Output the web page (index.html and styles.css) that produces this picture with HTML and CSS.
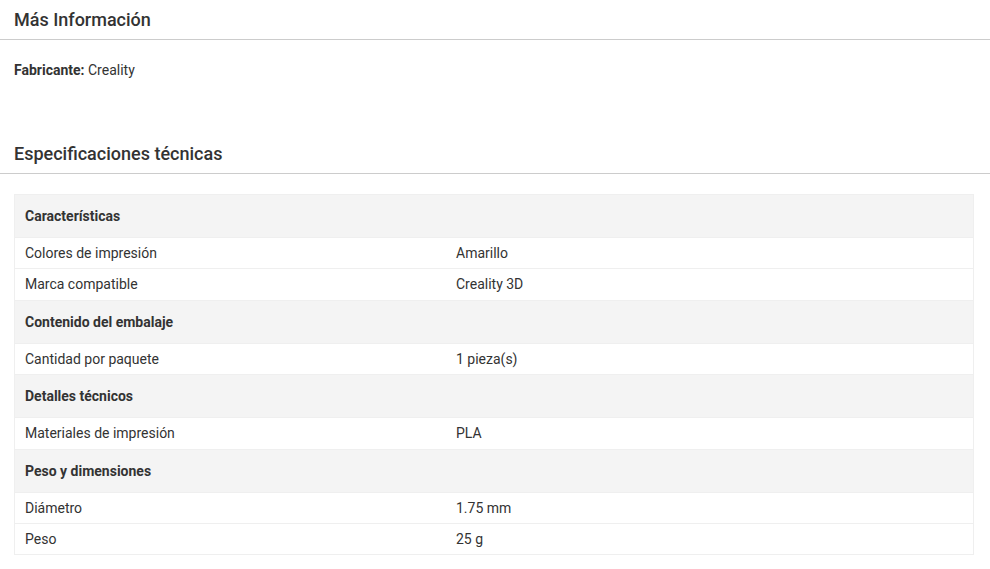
FILE: index.html
```html
<!DOCTYPE html>
<html lang="es">
<head>
  <meta charset="UTF-8">
  <meta name="viewport" content="width=device-width, initial-scale=1.0">
  <title>Más Información</title>
  <link rel="stylesheet" href="styles.css">
</head>
<body>
  <!-- Más información -->
  <h2 class="block-title">Más Información</h2>
  <p class="maker"><strong>Fabricante:</strong> Creality</p>

  <!-- Especificaciones -->
  <h2 class="block-title specs-title">Especificaciones técnicas</h2>
  <table class="specs">
    <tr class="group"><td colspan="2">Características</td></tr>
    <tr><td class="label">Colores de impresión</td><td>Amarillo</td></tr>
    <tr><td class="label">Marca compatible</td><td>Creality 3D</td></tr>
    <tr class="group"><td colspan="2">Contenido del embalaje</td></tr>
    <tr><td class="label">Cantidad por paquete</td><td>1 pieza(s)</td></tr>
    <tr class="group"><td colspan="2">Detalles técnicos</td></tr>
    <tr><td class="label">Materiales de impresión</td><td>PLA</td></tr>
    <tr class="group"><td colspan="2">Peso y dimensiones</td></tr>
    <tr><td class="label">Diámetro</td><td>1.75 mm</td></tr>
    <tr><td class="label">Peso</td><td>25 g</td></tr>
  </table>
</body>
</html>
```

FILE: styles.css
```css
body {
  font-family: Roboto, "Liberation Sans", sans-serif;
  margin: 0;
  color: #333;
  background-color: #fff;
  font-size: 14px;
}
.block-title {
  margin: 0;
  padding: 8px 14px 7px;
  font-size: 18px;
  line-height: 24px;
  font-weight: 500;
  color: #333;
  border-bottom: 1px solid #ccc;
}
.maker {
  margin: 20px 14px 0;
  line-height: 20px;
}
.maker strong {
  font-weight: 700;
}
.specs-title {
  margin-top: 54px;
}
.specs {
  margin: 20px 14px 0;
  width: 960px;
  border-collapse: collapse;
  border: 1px solid #efefef;
}
.specs td {
  padding: 6px 10px;
  line-height: 18.4px;
  border-bottom: 1px solid #efefef;
}
.specs .label {
  width: 411px;
}
.specs .group td {
  padding: 12px 10px;
  line-height: 18px;
  background-color: #f4f4f4;
  font-weight: 700;
}
```
